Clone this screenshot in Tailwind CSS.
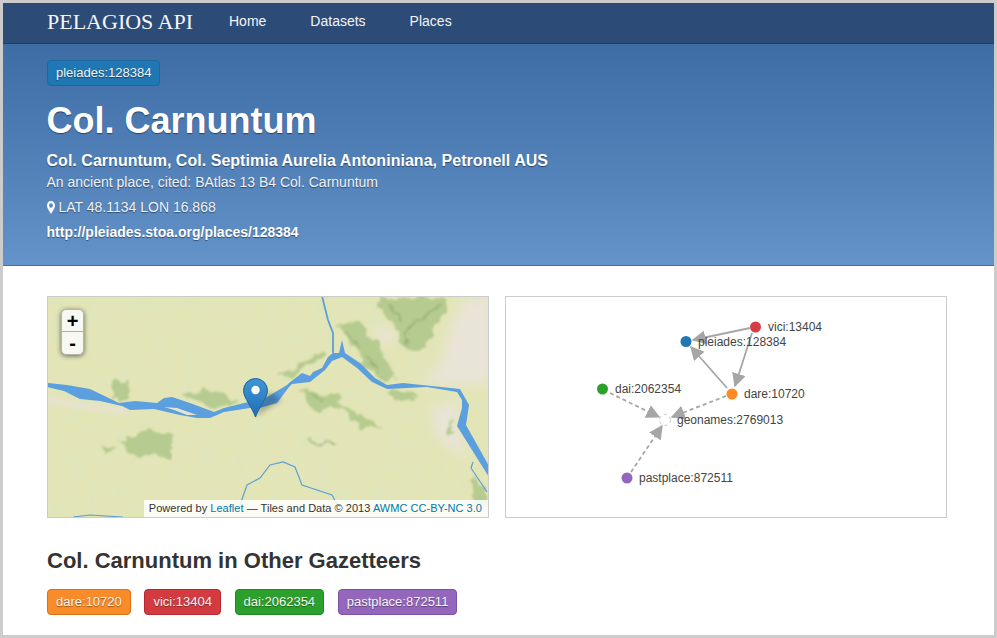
<!DOCTYPE html>
<html lang="en">
<head>
    <meta charset="UTF-8">
    <title>Col. Carnuntum</title>
    <script src="https://cdn.jsdelivr.net/npm/@tailwindcss/browser@4"></script>
</head>
<body class="bg-[#cccccc] font-['Liberation_Sans',Arial,sans-serif]">
    <div class="m-[3px] h-[632px] bg-white overflow-hidden">
        <!-- nav -->
        <nav class="h-[41px] bg-[#2c4b77] border-b border-[#223c60] flex items-center pl-[44px] text-white">
            <span class="font-['Liberation_Serif',serif] text-[22px] leading-[36px] w-[182px] text-[#f4f6f8] pb-[3px]">PELAGIOS API</span>
            <div class="flex gap-11 text-[14px] text-[#f5f5f5] pb-[3px]">
                <a>Home</a>
                <a>Datasets</a>
                <a>Places</a>
            </div>
        </nav>

        <!-- hero -->
        <header class="h-[222px] bg-gradient-to-b from-[#3e6ca5] to-[#6393c9] border-b border-[#466e9c] pl-[44px] pt-[16px] text-white [text-shadow:0_1px_1px_rgba(0,0,0,0.45)]">
            <span class="inline-flex items-center h-[26px] px-2 rounded-[4px] bg-[#1f77b4] border border-[#1b68a0] text-[13px] text-[#f4f4f4]">pleiades:128384</span>
            <h1 class="mt-[14px] -ml-[0.5px] text-[36px] leading-[42px] font-bold">Col. Carnuntum</h1>
            <p class="mt-[9px] -ml-[0.5px] text-[16px] leading-[20px] font-bold tracking-[0.03px]">Col. Carnuntum, Col. Septimia Aurelia Antoniniana, Petronell AUS</p>
            <p class="mt-[1px] -ml-[0.5px] text-[14px] leading-[20px] text-[#f0f3f8]">An ancient place, cited: BAtlas 13 B4 Col. Carnuntum</p>
            <p class="mt-[5px] -ml-[0.5px] text-[14px] leading-[20px] text-[#f0f3f8] flex items-center gap-[4px]">
                <svg width="8" height="13" viewBox="0 0 9 13" preserveAspectRatio="none"><path fill="#ffffff" fill-rule="evenodd" d="M4.5 0C2 0 0 2 0 4.4 0 7.2 3.3 11 4.5 13 5.7 11 9 7.2 9 4.4 9 2 7 0 4.5 0zm0 2.300a2.200 2.200 0 1 1 0 4.400 2.200 2.200 0 0 1 0-4.400z"/></svg>
                LAT 48.1134 LON 16.868
            </p>
            <p class="mt-[5px] -ml-[0.5px] text-[14px] leading-[20px] font-bold">http://pleiades.stoa.org/places/128384</p>
        </header>

        <!-- map and graph -->
        <section class="pl-[44px] pr-[47px] pt-[30px] grid grid-cols-2 gap-4">
            <div class="relative h-[222px] border border-[#cccccc] overflow-hidden bg-[#e4e5b6]">
                <svg class="absolute inset-0" width="440" height="220" viewBox="48 297 440 220">
                    <defs>
                        <filter id="wood" x="-20%" y="-20%" width="140%" height="140%">
                            <feTurbulence type="fractalNoise" baseFrequency="0.08" numOctaves="3" seed="7" result="n"/>
                            <feDisplacementMap in="SourceGraphic" in2="n" scale="14" xChannelSelector="R" yChannelSelector="G"/>
                            <feGaussianBlur stdDeviation="1.2"/>
                        </filter>
                        <filter id="softer"><feGaussianBlur stdDeviation="6"/></filter>
                        <filter id="soft"><feGaussianBlur stdDeviation="2.5"/></filter>
                        <filter id="grain" x="0" y="0" width="100%" height="100%">
                            <feTurbulence type="fractalNoise" baseFrequency="0.06" numOctaves="4" seed="4"/>
                            <feColorMatrix values="0 0 0 0 0.70  0 0 0 0 0.78  0 0 0 0 0.52  1.1 0 0 0 -0.42"/>
                        </filter>
                        <linearGradient id="pin" x1="0" y1="0" x2="0" y2="1">
                            <stop offset="0" stop-color="#3f96d6"/>
                            <stop offset="1" stop-color="#1f6fb5"/>
                        </linearGradient>
                    </defs>
                    <rect x="48" y="297" width="440" height="220" filter="url(#grain)"/>
                    <!-- pale areas -->
                    <g fill="#e9e4d8" filter="url(#softer)">
                        <path d="M447 340 L462 300 L492 296 L492 384 L417 384 L440 367 Z"/>
                        <path d="M372 325 L392 330 L395 345 L380 340 Z"/>
                        <path d="M430 410 L460 400 L456 425 L470 460 L440 440 Z"/>
                    </g>
                    <path fill="#e6e2cf" filter="url(#soft)" d="M47 396 L80 402 L125 408 L130 416 L90 410 L47 404 Z"/>
                    <!-- wooded areas -->
                    <g fill="#b6cb8f" filter="url(#wood)">
                        <path d="M380 298 L442 298 L447 315 L432 327 L428 347 L405 352 L398 332 L383 317 Z"/>
                        <path d="M337 325 L360 320 L380 350 L398 380 L385 382 L360 360 Z"/>
                        <path d="M277 378 L317 352 L325 357 L293 375 Z"/>
                        <path d="M298 390 L338 397 L345 408 L316 410 Z"/>
                        <path d="M343 405 L382 427 L358 427 Z"/>
                        <path d="M112 382 L132 382 L132 400 L112 400 Z"/>
                        <path d="M176 394 L207 389 L240 403 L214 408 Z"/>
                        <path d="M117 442 L147 428 L172 435 L172 455 L140 455 Z"/>
                        <path d="M103 445 L112 445 L112 452 L103 452 Z"/>
                        <path d="M388 392 L418 393 L412 402 L395 400 Z"/>
                        <path d="M473 475 L488 490 L488 505 L470 500 Z"/>
                        <path d="M448 418 L455 430 L450 436 Z"/>
                    </g>
                    <!-- hill shading -->
                    <g fill="none" stroke="#8ea56c" stroke-width="2" opacity="0.75" filter="url(#wood)">
                        <path d="M405 345 L412 325 L425 318 L438 306"/>
                        <path d="M392 305 L402 322"/>
                        <path d="M345 330 L360 350"/>
                        <path d="M365 355 L378 370"/>
                        <path d="M310 395 L322 402"/>
                        <path d="M310 440 L338 447"/>
                    </g>
                    <!-- river -->
                    <path fill="#5b9fdf" d="M47 383 L67 385 L90 389 L119 403 L135 401 L157 403 L164 398 L172 397 L190 403 L214 412 L224 408 L244 403 L260 400 L267 397 L287 385 L289 383 L302 373 L310 376 L313 372 L322 368 L328 357 L333 353 L339 353 L342 340 L345 353 L360 363 L375 378 L387 385 L403 383 L460 389 L469 405 L466 425 L489 466 L489 477 L457 426 L462 408 L462 400 L457 392 L427 387 L387 389 L372 382 L357 368 L342 357 L332 361 L325 370 L310 382 L292 384 L289 387 L277 403 L260 408 L250 408 L224 412 L210 418 L197 418 L180 415 L154 409 L130 410 L122 406 L100 401 L80 399 L64 391 L47 387 Z"/>
                    <path fill="#e3e5cf" d="M164 407 L177 408 L197 415 L187 415 L174 410 Z"/>
                    <!-- tributaries -->
                    <g fill="none" stroke="#5f9fd3" stroke-width="1.2">
                        <path stroke-width="1.8" d="M322 296 L328 320 L333 333 L333 353"/>
                        <path d="M240 505 L247 485 L260 478 L270 465 L283 462 L295 467 L302 485 L332 495 L338 506"/>
                        <path d="M73 517 L90 515 L123 517"/>
                        <path d="M473 462 L471 468 L487 492"/>
                    </g>
                    <!-- marker -->
                    <path fill="#000000" opacity="0.25" d="M255 417 L282 400 L270 392 L262 400 Z" filter="url(#soft)"/>
                    <path fill="url(#pin)" stroke="#22629b" stroke-width="1" d="M255.500 417 C252 407 243.500 398 243.500 390.500 A12 12 0 0 1 267.500 390.500 C267.500 398 259 407 255.500 417 Z"/>
                    <circle cx="255.500" cy="390" r="4.200" fill="#ffffff"/>
                </svg>
                <!-- zoom control -->
                <div class="absolute left-[13px] top-[12px] w-[23px] rounded-[5px] bg-[#f8f8f3] border border-[#b5b5ad] shadow-[0_1px_5px_rgba(0,0,0,0.55)] text-black font-bold text-center">
                    <div class="h-[22px] leading-[22px] text-[20px] border-b border-[#b0b0aa]">+</div>
                    <div class="h-[22px] leading-[22px] text-[20px]">-</div>
                </div>
                <!-- attribution -->
                <div class="absolute right-0 bottom-0 h-[17px] leading-[16px] pl-[5px] pr-[6px] bg-white/85 text-[11px] tracking-[0.03px] text-[#333333]">Powered by <a class="text-[#0078a8]">Leaflet</a> — Tiles and Data © 2013 <a class="text-[#0078a8]">AWMC CC-BY-NC 3.0</a></div>
            </div>

            <div class="h-[222px] border border-[#cccccc] overflow-hidden bg-white">
                <svg width="440" height="220" viewBox="506 297 440 220" class="font-['Liberation_Sans',Arial,sans-serif] text-[12px]">
                    <defs>
                        <marker id="arrow" viewBox="0 0 10 10" refX="9" refY="5" markerWidth="14" markerHeight="14" markerUnits="userSpaceOnUse" orient="auto">
                            <path d="M0 0 L10 5 L0 10 Z" fill="#a6a6a6"/>
                        </marker>
                    </defs>
                    <g stroke="#a6a6a6" stroke-width="1.8" fill="none">
                        <line x1="750" y1="328" x2="693" y2="340" marker-end="url(#arrow)"/>
                        <line x1="752" y1="333" x2="735" y2="386" marker-end="url(#arrow)"/>
                        <line x1="727" y1="388" x2="691" y2="347" marker-end="url(#arrow)"/>
                        <line x1="610" y1="393" x2="659" y2="417" stroke-dasharray="4 3" marker-end="url(#arrow)"/>
                        <line x1="726" y1="396" x2="672" y2="417" stroke-dasharray="4 3" marker-end="url(#arrow)"/>
                        <line x1="631" y1="472" x2="662" y2="426" stroke-dasharray="4 3" marker-end="url(#arrow)"/>
                    </g>
                    <circle cx="665" cy="420" r="5.500" fill="#ffffff" stroke="#c4c4c4" stroke-width="1" stroke-dasharray="3 3"/>
                    <circle cx="686" cy="341.500" r="5.500" fill="#1f77b4"/>
                    <circle cx="755.500" cy="327" r="5.500" fill="#d73c43"/>
                    <circle cx="732" cy="394" r="5.500" fill="#ff8a22"/>
                    <circle cx="602.500" cy="389" r="5.500" fill="#2ca02c"/>
                    <circle cx="627" cy="478" r="5.500" fill="#9467bd"/>
                    <g fill="#444444">
                        <text x="698" y="346">pleiades:128384</text>
                        <text x="768" y="331">vici:13404</text>
                        <text x="744" y="398">dare:10720</text>
                        <text x="615" y="393">dai:2062354</text>
                        <text x="677" y="424">geonames:2769013</text>
                        <text x="639" y="482">pastplace:872511</text>
                    </g>
                </svg>
            </div>
        </section>

        <!-- other gazetteers -->
        <section class="pl-[44px] pt-[28px]">
            <h2 class="text-[22px] leading-[30px] font-bold text-[#333333]">Col. Carnuntum in Other Gazetteers</h2>
            <div class="mt-[13px] flex gap-[13.6px] text-[13px] text-[#f6f6f6] [text-shadow:0_1px_1px_rgba(0,0,0,0.4)]">
                <span class="inline-flex items-center h-[26px] px-2 rounded-[4px] bg-[#f98b29] border border-[#d9701a]">dare:10720</span>
                <span class="inline-flex items-center h-[26px] px-2 rounded-[4px] bg-[#d33b40] border border-[#b32b30]">vici:13404</span>
                <span class="inline-flex items-center h-[26px] px-2 rounded-[4px] bg-[#2ca02c] border border-[#1f8a25]">dai:2062354</span>
                <span class="inline-flex items-center h-[26px] px-2 rounded-[4px] bg-[#9467bd] border border-[#7d52a6]">pastplace:872511</span>
            </div>
        </section>
    </div>
</body>
</html>
